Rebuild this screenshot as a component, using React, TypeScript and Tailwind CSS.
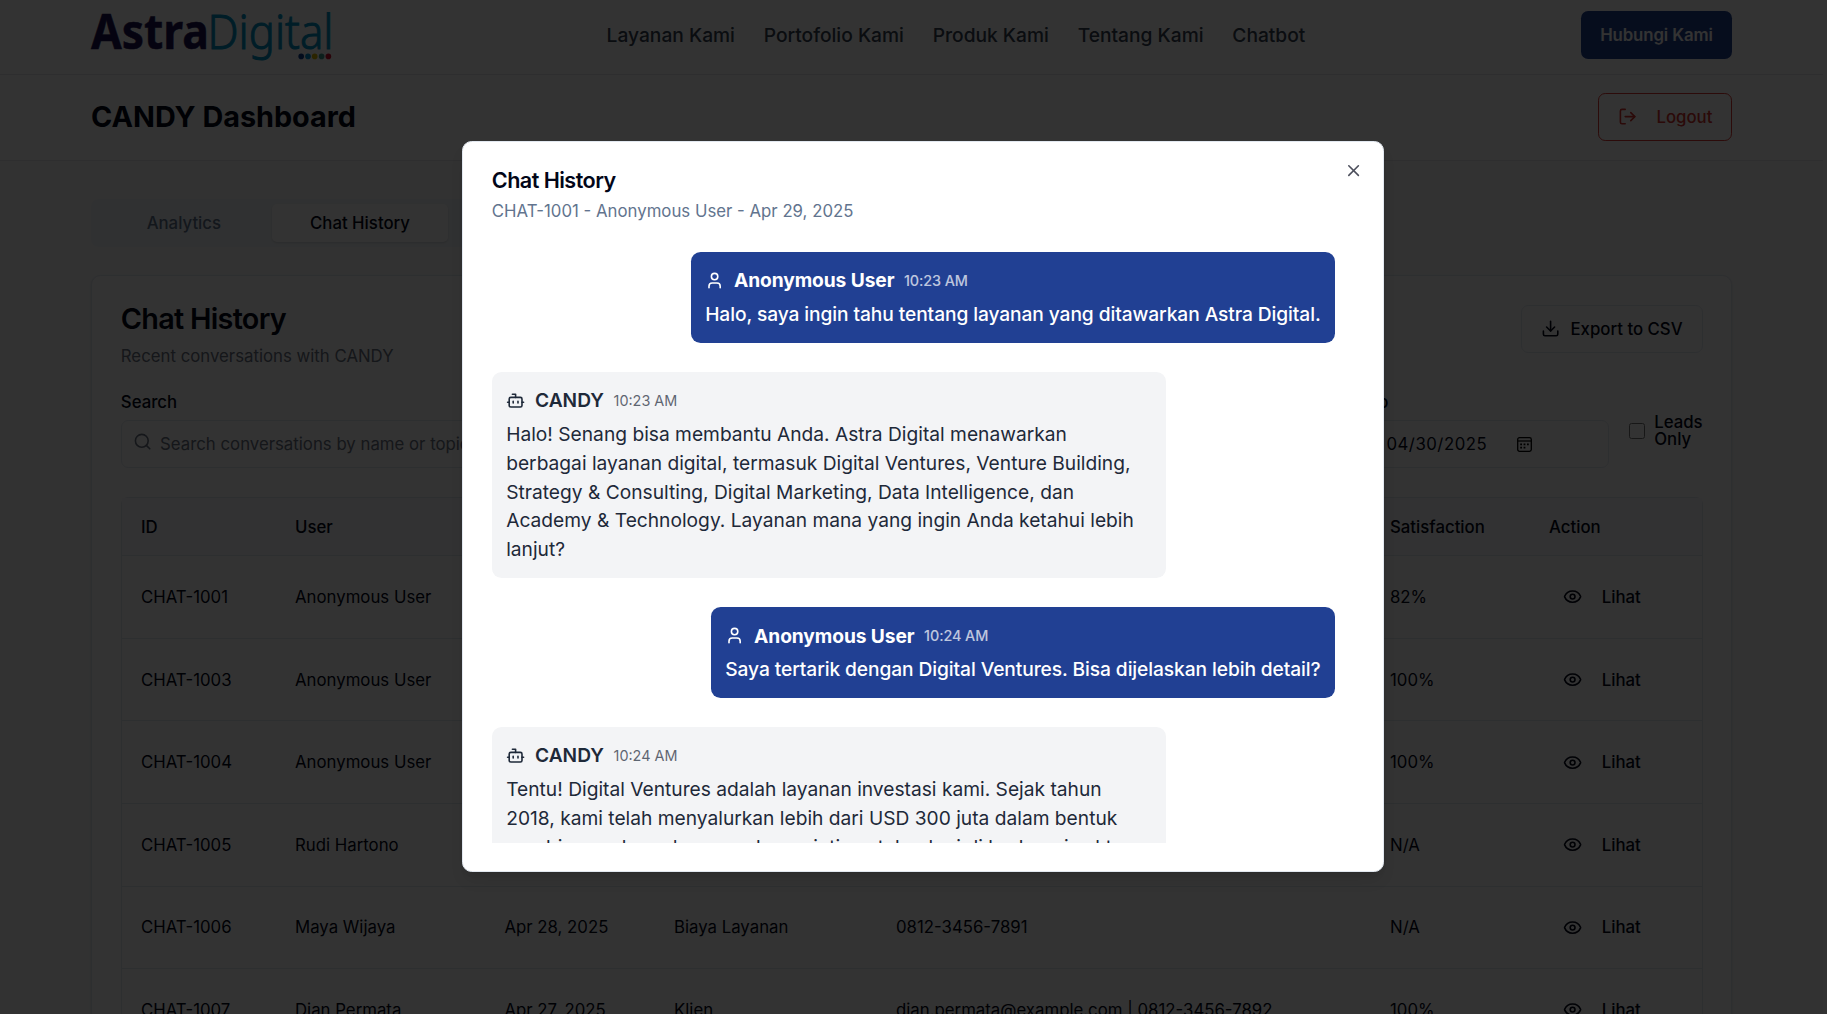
import { Bot, Download, Eye, LogOut, Search, User, X } from "lucide-react";

const navItems = ["Layanan Kami", "Portofolio Kami", "Produk Kami", "Tentang Kami", "Chatbot"];

const rows = [
  { id: "CHAT-1001", user: "Anonymous User", date: "", topic: "", contact: "", score: "82%" },
  { id: "CHAT-1003", user: "Anonymous User", date: "", topic: "", contact: "", score: "100%" },
  { id: "CHAT-1004", user: "Anonymous User", date: "", topic: "", contact: "", score: "100%" },
  { id: "CHAT-1005", user: "Rudi Hartono", date: "", topic: "", contact: "", score: "N/A" },
  { id: "CHAT-1006", user: "Maya Wijaya", date: "Apr 28, 2025", topic: "Biaya Layanan", contact: "0812-3456-7891", score: "N/A" },
  { id: "CHAT-1007", user: "Dian Permata", date: "Apr 27, 2025", topic: "Klien", contact: "dian.permata@example.com | 0812-3456-7892", score: "100%" },
];

const messages = [
  { from: "user", time: "10:23 AM", text: "Halo, saya ingin tahu tentang layanan yang ditawarkan Astra Digital." },
  {
    from: "bot",
    time: "10:23 AM",
    text: "Halo! Senang bisa membantu Anda. Astra Digital menawarkan berbagai layanan digital, termasuk Digital Ventures, Venture Building, Strategy & Consulting, Digital Marketing, Data Intelligence, dan Academy & Technology. Layanan mana yang ingin Anda ketahui lebih lanjut?",
  },
  { from: "user", time: "10:24 AM", text: "Saya tertarik dengan Digital Ventures. Bisa dijelaskan lebih detail?" },
  {
    from: "bot",
    time: "10:24 AM",
    text: "Tentu! Digital Ventures adalah layanan investasi kami. Sejak tahun 2018, kami telah menyalurkan lebih dari USD 300 juta dalam bentuk pembiayaan kepada perusahaan rintisan teknologi di berbagai sektor.",
  },
];

const columns = "grid grid-cols-[154px_209px_170px_222px_494px_159px_1fr]";

function Logo() {
  return (
    <svg width="242" height="48" viewBox="0 0 242 48" className="shrink-0 overflow-visible" aria-label="AstraDigital">
      <text x="0" y="37.5" textLength="118" lengthAdjust="spacingAndGlyphs" fontFamily="Noto Sans" fontWeight="700" fontSize="48.5" fill="#1c1250" stroke="#1c1250" strokeWidth="0.5">Astra</text>
      <text x="116.5" y="37.5" textLength="126" lengthAdjust="spacingAndGlyphs" fontFamily="Noto Sans" fontWeight="300" fontSize="48.5" fill="#0092c4" stroke="#0092c4" strokeWidth="1">Digital</text>
      <circle cx="210.2" cy="45.400" r="2.800" fill="#0b3c8c" />
      <circle cx="217" cy="45.400" r="2.800" fill="#0090d0" />
      <circle cx="223.700" cy="45.400" r="2.800" fill="#d8b400" />
      <circle cx="230.600" cy="45.400" r="2.800" fill="#3f9a8c" />
      <circle cx="237.400" cy="45.400" r="2.800" fill="#d01030" />
    </svg>
  );
}

function CalendarGlyph() {
  return (
    <svg width="15" height="15" viewBox="0 0 15 15" fill="none" stroke="#000">
      <rect x="0.700" y="0.700" width="13.600" height="13.600" rx="1.800" strokeWidth="1.300" />
      <path d="M1 4h13" strokeWidth="1.200" />
      <path d="M3.200 7.400h1.800M6.600 7.400h1.800M10 7.400h1.800M3.200 10.700h1.800M6.600 10.700h1.800" strokeWidth="1.800" />
    </svg>
  );
}

function Message({ from, time, text }: { from: string; time: string; text: string }) {
  const isUser = from === "user";
  return (
    <div className={isUser ? "flex justify-end" : "flex justify-start"}>
      <div
        className={
          isUser
            ? "max-w-[80%] rounded-[9.6px] bg-[#214093] p-[14.4px] font-medium tracking-[-0.095px] text-white"
            : "max-w-[80%] rounded-[9.6px] bg-gray-100 p-[14.4px] text-gray-800"
        }
      >
        <div className="mb-[4.8px] flex h-[28.8px] items-center gap-[9.6px] leading-[28.8px]">
          {isUser ? <User size={19.2} /> : <Bot size={19.2} />}
          <span className={isUser ? "font-bold" : "font-semibold"}>{isUser ? "Anonymous User" : "CANDY"}</span>
          <span className="pt-px text-[14.4px] leading-5 opacity-70">{time}</span>
        </div>
        <p className="leading-[28.8px]">{text}</p>
      </div>
    </div>
  );
}

function HistoryCard() {
  return (
    <section className="h-[800px] rounded-[9.6px] border border-slate-200 bg-white pt-[29px] pr-[28.4px] pl-[28.8px] shadow-sm">
      <div className="flex h-[50px] items-start justify-between">
        <div>
          <h2 className="text-[28.8px] leading-[28.8px] font-semibold tracking-tight">Chat History</h2>
          <p className="mt-[10px] leading-6 text-gray-500">Recent conversations with CANDY</p>
        </div>
        <button className="flex h-12 items-center gap-[10.6px] rounded-[7.2px] border border-slate-200 px-[19px] font-medium">
          <Download size={19.2} />
          Export to CSV
        </button>
      </div>

      <div className="mt-[39px] flex items-end">
        <div className="flex flex-1 flex-col gap-[9.4px] font-medium leading-[16.8px]">
          <label>Search</label>
          <div className="flex h-12 items-center gap-[7.6px] rounded-[7.2px] border border-slate-200 px-[11.5px] font-normal">
            <Search size={19.2} className="mb-[6px] text-gray-500" />
            <span className="text-gray-500">Search conversations by name or topic</span>
          </div>
        </div>
        <div className="ml-[19.2px] flex w-[259px] flex-col gap-[9.4px] font-medium leading-[16.8px]">
          <label className="w-[38px] text-right">To</label>
          <div className="flex h-12 items-center rounded-[7.2px] border border-slate-200 pl-[35px] font-normal">
            <span className="w-[131px] tracking-[0.5px]">04/30/2025</span>
            <CalendarGlyph />
          </div>
        </div>
        <div className="ml-[19.2px] flex h-[74.2px] w-[74px] items-center gap-[9.6px]">
          <span className="size-4 shrink-0 rounded-[2.5px] border border-[#767676]" />
          <span className="leading-[16.8px] font-medium">Leads Only</span>
        </div>
      </div>

      <div className="mt-[29px] rounded-t-[7.200px] border border-slate-200">
        <div className={`${columns} h-[58px] items-center border-b border-slate-200 bg-slate-50 font-medium`}>
          {["ID", "User", "", "", "", "Satisfaction", "Action"].map((label, index) => (
            <span key={index} className="pl-[19.2px]">{label}</span>
          ))}
        </div>
        {rows.map((row) => (
          <div key={row.id} className={`${columns} h-[82.6px] items-center border-b border-slate-200`}>
            <span className="pl-[19.2px]">{row.id}</span>
            <span className="pl-[19.2px]">{row.user}</span>
            <span className="pl-[19.6px]">{row.date}</span>
            <span className="pl-[19.2px]">{row.topic}</span>
            <span className="pl-[19.2px]">{row.contact}</span>
            <span className="pl-[19.2px]">{row.score}</span>
            <span className="flex items-center gap-[19.2px] pl-[33.6px] font-medium">
              <Eye size={19.2} />
              Lihat
            </span>
          </div>
        ))}
      </div>
    </section>
  );
}

export default function App() {
  return (
    <div className="relative flex h-[1014px] w-[1827px] overflow-hidden bg-white font-[Inter,sans-serif] text-[16.8px] leading-6 text-slate-950">
      <div className="h-full w-[1823px] bg-gray-50">
        <header className="flex h-[75px] items-center justify-between border-b border-gray-200 bg-white px-[91px] pb-1">
          <Logo />
          <nav className="mr-[2px] flex gap-[28.8px] text-[19.2px] font-medium text-gray-700">
            {navItems.map((item) => (
              <a key={item}>{item}</a>
            ))}
          </nav>
          <button className="h-12 rounded-[7.2px] bg-[#214093] px-[19.2px] font-semibold tracking-[-0.1px] text-white">Hubungi Kami</button>
        </header>

        <div className="flex h-[86px] items-center justify-between border-b border-gray-200 bg-white px-[91px] pb-[2px]">
          <h1 className="text-[28.8px] font-bold">CANDY Dashboard</h1>
          <button className="flex h-12 items-center gap-[19.2px] rounded-[7.2px] border border-[#dc3a35] px-[18.6px] font-medium text-[#d6332d]">
            <LogOut size={19.2} />
            Logout
          </button>
        </div>

        <main className="px-[91px] pt-[38px]">
          <div className="mb-[28px] grid h-12 w-[538px] grid-cols-3 items-center rounded-[7.2px] bg-slate-100 px-[4.8px] text-center font-medium text-slate-500">
            <span>Analytics</span>
            <span className="rounded-[4.8px] bg-white py-[7.2px] text-slate-950 shadow-sm">Chat History</span>
          </div>
          <HistoryCard />
        </main>
      </div>

      <div className="absolute inset-0 bg-black/80" />

      <div
        role="dialog"
        className="absolute top-[141px] left-[462px] flex h-[731px] w-[922px] flex-col rounded-[9.6px] border border-slate-200 bg-white px-[28.8px] pt-[28px] shadow-lg"
      >
        <X size={19.2} className="absolute top-[19px] right-[20px] opacity-70" />
        <h2 className="text-[21.6px] leading-[21.6px] font-semibold tracking-tight">Chat History</h2>
        <p className="mt-[7px] leading-6 text-slate-500">CHAT-1001 - Anonymous User - Apr 29, 2025</p>
        <div className="mt-[29.4px] flex h-[591px] flex-col gap-[28.8px] overflow-hidden pr-[19.2px] text-[19.2px]">
          {messages.map((message) => (
            <Message key={message.from + message.time} {...message} />
          ))}
        </div>
      </div>
    </div>
  );
}
